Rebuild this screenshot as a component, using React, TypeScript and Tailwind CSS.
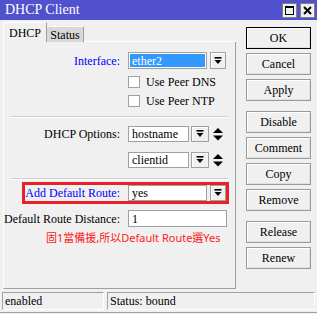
import React from 'react';

const DropIcon = () => (
  <svg width="8" height="8" viewBox="0 0 8 8">
    <rect x="0.5" y="0" width="7" height="1.6" fill="#000" />
    <polygon points="0.5,3 7.5,3 4,7" fill="#000" />
  </svg>
);

const UpDownIcon = () => (
  <svg width="10" height="13" viewBox="0 0 10 13">
    <polygon points="5,0 10,5 0,5" fill="#000" />
    <polygon points="0,7.5 10,7.5 5,12.5" fill="#000" />
  </svg>
);

const DropButton = ({ w = 'w-[16px]', h = 'h-[17px]' }: { w?: string; h?: string }) => (
  <div
    className={`${w} ${h} border border-[#a0a0a0] bg-[#f0f0f0] flex items-center justify-center shadow-[inset_1px_1px_0_#fff]`}
  >
    <DropIcon />
  </div>
);

const Field = ({ text, w, h = 'h-[17px]' }: { text: string; w: string; h?: string }) => (
  <div className={`${w} ${h} border border-[#a0a0a0] bg-white flex items-center pl-[3px] leading-none`}>
    {text}
  </div>
);

const Check = ({ label }: { label: string }) => (
  <div className="flex items-center h-[12px] ml-[124px]">
    <div className="w-[12px] h-[12px] border border-[#a0a0a0] bg-white" />
    <span className="ml-[6px] leading-none">{label}</span>
  </div>
);

const Separator = () => (
  <div className="ml-[7px] w-[217px] h-[2px] border-t border-[#cfcfcf] border-b border-b-white" />
);

// 오른쪽 버튼 목록 (빈 문자열은 간격)
const buttons = ['OK', 'Cancel', 'Apply', '', 'Disable', 'Comment', 'Copy', 'Remove', '', 'Release', 'Renew'];

export default function App() {
  return (
    <div className="w-[317px] h-[314px] bg-[#f0f0f0] font-['Liberation_Serif',serif] text-[12px] text-black overflow-hidden flex flex-col">
      {/* 타이틀 바 */}
      <div className="h-[20px] bg-[#5151cd] flex items-center justify-between pl-[5px] pr-[2px]">
        <span className="text-white text-[14px] leading-none">DHCP Client</span>
        <div className="flex gap-[3px]">
          <div className="w-[15px] h-[15px] bg-[#f0f0f0] border border-[#808080] flex items-center justify-center">
            <div className="w-[9px] h-[9px] border border-black border-t-2" />
          </div>
          <div className="w-[15px] h-[15px] bg-[#f0f0f0] border border-[#808080] flex items-center justify-center">
            <svg width="9" height="9" viewBox="0 0 9 9">
              <path d="M1 1 L8 8 M8 1 L1 8" stroke="#000" strokeWidth="2" />
            </svg>
          </div>
        </div>
      </div>

      <div className="flex h-[272px]">
        {/* 왼쪽: 탭 + 패널 */}
        <div className="ml-[3px] w-[233px] flex flex-col pt-[2px]">
          <div className="h-[20px] flex items-end">
            <div className="w-[44px] h-[20px] border-l border-t border-white border-r border-r-[#a0a0a0] flex items-center justify-center pt-[1px]">
              DHCP
            </div>
            <div className="w-[37px] h-[16px] bg-[#d8d8d8] border-t border-white border-r border-r-[#a0a0a0] flex items-center justify-center">
              Status
            </div>
            <div className="flex-1 border-b border-white" />
          </div>

          <div className="h-[247px] border-l border-white border-r border-r-[#a0a0a0] border-b border-b-[#a0a0a0] flex flex-col">
            {/* Interface */}
            <div className="mt-[10px] h-[17px] flex items-center">
              <span className="w-[116px] text-right text-[#0000ff]">Interface:</span>
              <div className="ml-[8px] w-[79px] h-[17px] border border-[#a0a0a0] bg-white p-px">
                <div className="h-full bg-[#3399ff] text-white flex items-center pl-[2px] leading-none">ether2</div>
              </div>
              <div className="ml-[3px]">
                <DropButton />
              </div>
            </div>

            <div className="mt-[7px]">
              <Check label="Use Peer DNS" />
            </div>
            <div className="mt-[7px]">
              <Check label="Use Peer NTP" />
            </div>

            <div className="mt-[9px]">
              <Separator />
            </div>

            {/* DHCP Options */}
            <div className="mt-[8px] h-[16px] flex items-center">
              <span className="w-[116px] text-right">DHCP Options:</span>
              <div className="ml-[8px]">
                <Field text="hostname" w="w-[61px]" h="h-[16px]" />
              </div>
              <div className="ml-[2px]">
                <DropButton w="w-[18px]" h="h-[16px]" />
              </div>
              <div className="ml-[4px] flex items-center">
                <UpDownIcon />
              </div>
            </div>
            <div className="mt-[10px] h-[16px] flex items-center">
              <div className="ml-[124px]">
                <Field text="clientid" w="w-[61px]" h="h-[16px]" />
              </div>
              <div className="ml-[2px]">
                <DropButton w="w-[18px]" h="h-[16px]" />
              </div>
              <div className="ml-[4px] flex items-center">
                <UpDownIcon />
              </div>
            </div>

            <div className="mt-[10px]">
              <Separator />
            </div>

            {/* Add Default Route (빨간 테두리) */}
            <div className="mt-[2px] ml-[18px] w-[207px] h-[22px] border-[3px] border-[#e8202a] flex items-center">
              <span className="w-[95px] text-right text-[#0000ff]">Add Default Route:</span>
              <div className="ml-[8px]">
                <Field text="yes" w="w-[79px]" h="h-[16px]" />
              </div>
              <div className="ml-[3px]">
                <DropButton h="h-[16px]" />
              </div>
            </div>

            {/* Default Route Distance */}
            <div className="mt-[6px] h-[17px] flex items-center">
              <span className="w-[116px] text-right">Default Route Distance:</span>
              <div className="ml-[8px]">
                <Field text="1" w="w-[99px]" />
              </div>
            </div>

            <div className="mt-[3px] pl-[42px] h-[15px] flex items-center font-['Noto_Sans','Noto_Sans_CJK_TC',sans-serif] text-[11px] text-[#ff2020] leading-none whitespace-nowrap">
              固1當備援,所以Default Route選Yes
            </div>
          </div>
        </div>

        {/* 오른쪽 버튼 */}
        <div className="ml-[10px] w-[65px] pt-[7px] flex flex-col gap-[4px]">
          {buttons.map((b, i) =>
            b === '' ? (
              <div key={i} className="h-[2px]" />
            ) : (
              <div
                key={i}
                className={`h-[22px] flex items-center justify-center bg-[#f0f0f0] border ${
                  b === 'OK' ? 'border-black' : 'border-[#9a9a9a]'
                } shadow-[inset_1px_1px_0_#fff,inset_-1px_-1px_0_#e0e0e0]`}
              >
                {b}
              </div>
            ),
          )}
        </div>
      </div>

      {/* 상태 바 */}
      <div className="h-[18px] flex px-[2px] gap-[3px]">
        <div className="w-[102px] border border-[#a0a0a0] border-r-white border-b-white flex items-center pl-[2px]">
          enabled
        </div>
        <div className="flex-1 border border-[#a0a0a0] border-r-white border-b-white flex items-center pl-[2px]">
          Status: bound
        </div>
      </div>
      <div className="mt-[2px] border-t border-[#a0a0a0]" />
    </div>
  );
}
